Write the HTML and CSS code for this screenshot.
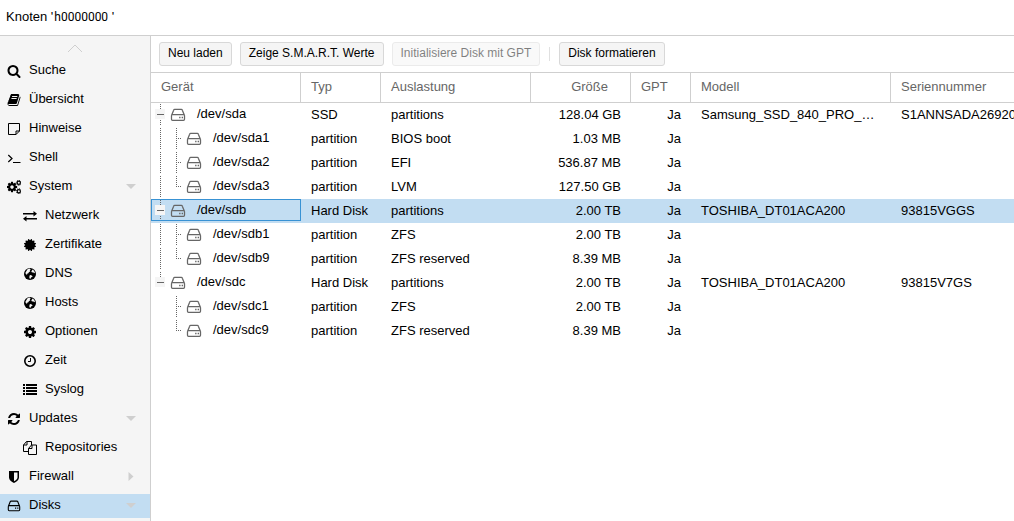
FILE: index.html
```html
<!DOCTYPE html>
<html lang="de">
<head>
<meta charset="utf-8">
<title>Knoten – Disks</title>
<link rel="stylesheet" href="styles.css">
</head>
<body>
<svg class="sprite" aria-hidden="true">
  <symbol id="search" viewBox="0 0 1792 1792"><path d="M1216 832q0-185-131.500-316.500t-316.500-131.500-316.500 131.500-131.500 316.500 131.500 316.500 316.500 131.500 316.500-131.500 131.500-316.500zm512 832q0 52-38 90t-90 38q-54 0-90-38l-343-342q-179 124-399 124-143 0-273.500-55.500t-225-150-150-225-55.500-273.500 55.500-273.500 150-225 225-150 273.500-55.500 273.500 55.500 225 150 150 225 55.500 273.500q0 220-124 399l343 343q37 37 37 90z"/></symbol>
  <symbol id="book" viewBox="0 0 1792 1792"><path d="M1703 478q40 57 18 129l-275 906q-19 64-76.500 107.500t-122.500 43.500h-923q-77 0-148.500-53.500t-99.500-131.500q-24-67-2-127 0-4 3-27t4-37q1-8-3-21.500t-3-19.500q2-11 8-21t16.500-23.500 16.500-23.500q23-38 45-91.500t30-91.500q3-10 .5-30t-.5-28q3-11 17-28t17-23q21-36 42-92t25-90q1-9-2.500-32t.5-28q4-13 22-30.500t22-22.500q19-26 42.500-84.500t27.500-96.500q1-8-3-25.500t-2-26.500q2-8 9-18t18-23 17-21q8-12 16.500-30.500t15-35 16-36 19.500-32 26.500-23.500 36-11.500 47.500 5.500l-1 3q38-9 51-9h761q74 0 114 56t18 130l-274 906q-36 119-71.500 153.500t-128.500 34.500h-869q-27 0-38 15-11 16-1 43 24 70 144 70h923q29 0 56-15.500t35-41.500l300-987q7-22 5-57 38 15 59 43zm-1064 2q-4 13 2 22.500t20 9.500h608q13 0 25.500-9.500t16.500-22.500l21-64q4-13-2-22.500t-20-9.500h-608q-13 0-25.500 9.500t-16.500 22.500zm-83 256q-4 13 2 22.500t20 9.500h608q13 0 25.500-9.500t16.500-22.500l21-64q4-13-2-22.500t-20-9.500h-608q-13 0-25.500 9.500t-16.500 22.500z"/></symbol>
  <symbol id="note" viewBox="0 0 14 14"><path d="M1.500 1.500h11v7.500l-3.500 3.500h-7.500zM12.500 9h-3.500v3.500" fill="none" stroke="currentColor"/></symbol>
  <symbol id="terminal" viewBox="0 0 14 14"><path d="M1.300 4l3.700 3.500-3.700 3.500M6 11.500h7.500" fill="none" stroke="currentColor" stroke-width="1.200"/></symbol>
  <symbol id="cog" viewBox="0 0 1792 1792"><path d="M1152 896q0-106-75-181t-181-75-181 75-75 181 75 181 181 75 181-75 75-181zm512-109v222q0 12-8 23t-20 13l-185 28q-19 54-39 91 35 50 107 138 10 12 10 25t-9 23q-27 37-99 108t-94 71q-12 0-26-9l-138-108q-44 23-91 38-16 136-29 186-7 28-36 28h-222q-14 0-24.500-8.500t-11.500-21.500l-28-184q-49-16-90-37l-141 107q-10 9-25 9-14 0-25-11-126-114-165-168-7-10-7-23 0-12 8-23 15-21 51-66.500t54-70.500q-27-50-41-99l-183-27q-13-2-21-12.500t-8-23.500v-222q0-12 8-23t19-13l186-28q14-46 39-92-40-57-107-138-10-12-10-24 0-10 9-23 26-36 98.500-107.500t94.500-71.500q13 0 26 10l138 107q44-23 91-38 16-136 29-186 7-28 36-28h222q14 0 24.500 8.500t11.500 21.500l28 184q49 16 90 37l142-107q9-9 24-9 13 0 25 10 129 119 165 170 7 8 7 22 0 12-8 23-15 21-51 66.500t-54 70.500q26 50 41 98l183 28q13 2 21 12.500t8 23.500z"/></symbol>
  <symbol id="cogs" viewBox="0 0 14 14" overflow="visible"><use href="#cog" x="-1" y="1" width="12" height="12"/><g fill="none" stroke="currentColor"><circle cx="11.800" cy="2.800" r="1.600" stroke-width="1.200"/><circle cx="11.800" cy="2.800" r="2.500" stroke-dasharray="1 .96"/><circle cx="11.800" cy="11.200" r="1.600" stroke-width="1.200"/><circle cx="11.800" cy="11.200" r="2.500" stroke-dasharray="1 .96"/></g></symbol>
  <symbol id="exchange" viewBox="0 0 14 14"><path d="M0 4h10.500V2l3.500 2.800-3.500 2.700V5.500H0zM14 9H3.500V7L0 9.800l3.500 2.700v-2H14z"/></symbol>
  <symbol id="certificate" viewBox="0 0 1792 1792"><path d="M1504 896l138 135q30 28 20 70-12 41-52 51l-188 48 53 186q12 41-19 70-29 31-70 19l-186-53-48 188q-10 40-51 52-12 2-19 2-31 0-51-22l-135-138-135 138q-28 30-70 20-41-11-51-52l-48-188-186 53q-41 12-70-19-31-29-19-70l53-186-188-48q-40-10-52-51-10-42 20-70l138-135-138-135q-30-28-20-70 12-41 52-51l188-48-53-186q-12-41 19-70 29-31 70-19l186 53 48-188q10-41 51-51 41-12 70 19l135 139 135-139q29-30 70-19 41 10 51 51l48 188 186-53q41-12 70 19 31 29 19 70l-53 186 188 48q40 10 52 51 10 42-20 70z"/></symbol>
  <symbol id="globe" viewBox="0 0 14 14"><circle cx="7" cy="7" r="6"/><path class="land" d="M4.500 2.200l2-.6 1.200 1-1 .8.600.800-1.400 1-.8 1.300-1.300.3.500 1-1-.3-1-1.600zM8.300 4.500l1.200-1.900 1.600 1.200.9 2-1 .5-.8-1-1.200.2zM7 8l1.800.4.900 1-1.600 1-1 1.800-.8-1.800.2-1.400z"/></symbol>
  <symbol id="clock" viewBox="0 0 14 14"><g fill="none" stroke="currentColor"><circle cx="7" cy="7" r="5.200" stroke-width="1.600"/><path d="M7.500 4v3.500H5"/></g></symbol>
  <symbol id="list" viewBox="0 0 14 14"><path d="M0 1h2v2H0zM3 1h11v2H3zM0 4h2v2H0zM3 4h11v2H3zM0 7h2v2H0zM3 7h11v2H3zM0 10h2v2H0zM3 10h11v2H3z"/></symbol>
  <symbol id="refresh" viewBox="0 0 1792 1792"><path d="M1639 1056q0 5-1 7-64 268-268 434.500t-478 166.500q-146 0-282.500-55t-243.500-157l-129 129q-19 19-45 19t-45-19-19-45v-448q0-26 19-45t45-19h448q26 0 45 19t19 45-19 45l-137 137q71 66 161 102t187 36q134 0 250-65t186-179q11-17 53-117 8-23 30-23h192q13 0 22.500 9.500t9.500 22.500zm25-800v448q0 26-19 45t-45 19h-448q-26 0-45-19t-19-45 19-45l138-138q-148-137-349-137-134 0-250 65t-186 179q-11 17-53 117-8 23-30 23h-199q-13 0-22.500-9.500t-9.500-22.500v-7q65-268 270-434.500t480-166.500q146 0 284 55.500t245 156.500l130-129q19-19 45-19t45 19 19 45z"/></symbol>
  <symbol id="files" viewBox="0 0 14 14"><path d="M5.500 10.500h-5V4L3.500.5h5V4M4 .5V4H.5M8.500 4h5v9.500h-8V7.500zM9 4v3.500H5.500" fill="none" stroke="currentColor"/></symbol>
  <symbol id="shield" viewBox="0 0 14 14"><path fill-rule="evenodd" d="M2 1h10v6.500c0 2.500-2.500 4.500-5 5.500-2.500-1-5-3-5-5.500zM7 2.500v8.800c2-1 3.500-2.300 3.500-3.800v-5z"/></symbol>
  <symbol id="hdd" viewBox="0 0 14 14"><path d="M1.300 7.500v3.300q0 .9.900.9h9.600q.9 0 .9-.9V7.500q0-.9-.9-.9H2.200q-.9 0-.9.900L3.200 2.800q.200-.7.900-.7h5.800q.7 0 .9.700l1.900 4.700" fill="none" stroke="currentColor" stroke-width="1.100"/><path d="M8 8.600h1.200v1.200H8zM10.200 8.600h1.200v1.200h-1.200z"/></symbol>
  <symbol id="down" viewBox="0 0 10 10"><path d="M0 2h10L5 7z"/></symbol>
  <symbol id="right" viewBox="0 0 10 10"><path d="M2.500 0v9l5-4.500z"/></symbol>
  <symbol id="minus" viewBox="0 0 16 24"><path class="box" d="M4 6h10v10H4z"/><path d="M6 11h7v1H6z"/></symbol>
  <symbol id="line" viewBox="0 0 16 24"><path class="dots" d="M9.500 1v21"/></symbol>
  <symbol id="line-top" viewBox="0 0 16 24"><path class="dots" d="M9.500 1v5"/></symbol>
  <symbol id="tee" viewBox="0 0 16 24"><path class="dots" d="M9.500 1v21M11 11.500h3"/></symbol>
  <symbol id="end" viewBox="0 0 16 24"><path class="dots" d="M9.500 1v11M11 11.500h3"/></symbol>
</svg>

<header class="title"><h1>Knoten '<span class="node">h0000000</span> '</h1></header>
<div class="layout">
  <nav class="sidebar" aria-label="Knoten">
    <button class="scroll-up" aria-label="Nach oben"><svg viewBox="0 0 16 10"><path d="M1 9l7-7 7 7"/></svg></button>
    <ul class="menu">
      <li><a class="item" href="#"><svg class="icon"><use href="#search"/></svg><span class="label">Suche</span></a></li>
      <li><a class="item" href="#"><svg class="icon"><use href="#book"/></svg><span class="label">Übersicht</span></a></li>
      <li><a class="item" href="#"><svg class="icon"><use href="#note"/></svg><span class="label">Hinweise</span></a></li>
      <li><a class="item" href="#"><svg class="icon"><use href="#terminal"/></svg><span class="label">Shell</span></a></li>
      <li><a class="item" href="#"><svg class="icon"><use href="#cogs"/></svg><span class="label">System</span><svg class="caret"><use href="#down"/></svg></a></li>
      <li><a class="item sub" href="#"><svg class="icon"><use href="#exchange"/></svg><span class="label">Netzwerk</span></a></li>
      <li><a class="item sub" href="#"><svg class="icon"><use href="#certificate"/></svg><span class="label">Zertifikate</span></a></li>
      <li><a class="item sub" href="#"><svg class="icon"><use href="#globe"/></svg><span class="label">DNS</span></a></li>
      <li><a class="item sub" href="#"><svg class="icon"><use href="#globe"/></svg><span class="label">Hosts</span></a></li>
      <li><a class="item sub" href="#"><svg class="icon"><use href="#cog"/></svg><span class="label">Optionen</span></a></li>
      <li><a class="item sub" href="#"><svg class="icon"><use href="#clock"/></svg><span class="label">Zeit</span></a></li>
      <li><a class="item sub" href="#"><svg class="icon"><use href="#list"/></svg><span class="label">Syslog</span></a></li>
      <li><a class="item" href="#"><svg class="icon"><use href="#refresh"/></svg><span class="label">Updates</span><svg class="caret"><use href="#down"/></svg></a></li>
      <li><a class="item sub" href="#"><svg class="icon"><use href="#files"/></svg><span class="label">Repositories</span></a></li>
      <li><a class="item" href="#"><svg class="icon"><use href="#shield"/></svg><span class="label">Firewall</span><svg class="caret"><use href="#right"/></svg></a></li>
      <li><a class="item selected" href="#" aria-current="page"><svg class="icon"><use href="#hdd"/></svg><span class="label">Disks</span><svg class="caret"><use href="#down"/></svg></a></li>
    </ul>
  </nav>
  <main class="main">
    <div class="toolbar">
      <button class="btn">Neu laden</button>
      <button class="btn">Zeige S.M.A.R.T. Werte</button>
      <button class="btn" disabled>Initialisiere Disk mit GPT</button>
      <span class="separator"></span>
      <button class="btn">Disk formatieren</button>
    </div>
    <table class="grid">
      <colgroup><col class="c-device"><col class="c-type"><col class="c-usage"><col class="c-size"><col class="c-gpt"><col class="c-model"><col></colgroup>
      <thead><tr><th>Gerät</th><th>Typ</th><th>Auslastung</th><th class="size">Größe</th><th>GPT</th><th>Modell</th><th>Seriennummer</th></tr></thead>
      <tbody>
        <tr><td class="device"><div class="tree"><button class="toggle" aria-label="Zuklappen"><svg class="elbow"><use href="#line"/><use href="#minus"/></svg></button><svg class="disk"><use href="#hdd"/></svg><span class="name">/dev/sda</span></div></td><td>SSD</td><td>partitions</td><td class="num">128.04 GB</td><td class="num">Ja</td><td>Samsung_SSD_840_PRO_Series</td><td class="serial">S1ANNSADA26920</td></tr>
        <tr><td class="device"><div class="tree"><svg class="elbow"><use href="#line"/></svg><svg class="elbow"><use href="#tee"/></svg><svg class="disk"><use href="#hdd"/></svg><span class="name">/dev/sda1</span></div></td><td>partition</td><td>BIOS boot</td><td class="num">1.03 MB</td><td class="num">Ja</td><td></td><td></td></tr>
        <tr><td class="device"><div class="tree"><svg class="elbow"><use href="#line"/></svg><svg class="elbow"><use href="#tee"/></svg><svg class="disk"><use href="#hdd"/></svg><span class="name">/dev/sda2</span></div></td><td>partition</td><td>EFI</td><td class="num">536.87 MB</td><td class="num">Ja</td><td></td><td></td></tr>
        <tr><td class="device"><div class="tree"><svg class="elbow"><use href="#line"/></svg><svg class="elbow"><use href="#end"/></svg><svg class="disk"><use href="#hdd"/></svg><span class="name">/dev/sda3</span></div></td><td>partition</td><td>LVM</td><td class="num">127.50 GB</td><td class="num">Ja</td><td></td><td></td></tr>
        <tr class="selected"><td class="device focused"><div class="tree"><button class="toggle" aria-label="Zuklappen"><svg class="elbow"><use href="#line"/><use href="#minus"/></svg></button><svg class="disk"><use href="#hdd"/></svg><span class="name">/dev/sdb</span></div></td><td>Hard Disk</td><td>partitions</td><td class="num">2.00 TB</td><td class="num">Ja</td><td>TOSHIBA_DT01ACA200</td><td class="serial">93815VGGS</td></tr>
        <tr><td class="device"><div class="tree"><svg class="elbow"><use href="#line"/></svg><svg class="elbow"><use href="#tee"/></svg><svg class="disk"><use href="#hdd"/></svg><span class="name">/dev/sdb1</span></div></td><td>partition</td><td>ZFS</td><td class="num">2.00 TB</td><td class="num">Ja</td><td></td><td></td></tr>
        <tr><td class="device"><div class="tree"><svg class="elbow"><use href="#line"/></svg><svg class="elbow"><use href="#end"/></svg><svg class="disk"><use href="#hdd"/></svg><span class="name">/dev/sdb9</span></div></td><td>partition</td><td>ZFS reserved</td><td class="num">8.39 MB</td><td class="num">Ja</td><td></td><td></td></tr>
        <tr><td class="device"><div class="tree"><button class="toggle" aria-label="Zuklappen"><svg class="elbow"><use href="#line-top"/><use href="#minus"/></svg></button><svg class="disk"><use href="#hdd"/></svg><span class="name">/dev/sdc</span></div></td><td>Hard Disk</td><td>partitions</td><td class="num">2.00 TB</td><td class="num">Ja</td><td>TOSHIBA_DT01ACA200</td><td class="serial">93815V7GS</td></tr>
        <tr><td class="device"><div class="tree"><span class="elbow"></span><svg class="elbow"><use href="#tee"/></svg><svg class="disk"><use href="#hdd"/></svg><span class="name">/dev/sdc1</span></div></td><td>partition</td><td>ZFS</td><td class="num">2.00 TB</td><td class="num">Ja</td><td></td><td></td></tr>
        <tr><td class="device"><div class="tree"><span class="elbow"></span><svg class="elbow"><use href="#end"/></svg><svg class="disk"><use href="#hdd"/></svg><span class="name">/dev/sdc9</span></div></td><td>partition</td><td>ZFS reserved</td><td class="num">8.39 MB</td><td class="num">Ja</td><td></td><td></td></tr>
      </tbody>
    </table>
  </main>
</div>
</body>
</html>
```
FILE: styles.css
```css
* { box-sizing: border-box; }

body {
  display: flex;
  flex-direction: column;
  height: 100vh;
  margin: 0;
  overflow: hidden;
  background: #fff;
  color: #000;
  font-family: "Liberation Sans", Arial, sans-serif;
  font-size: 13px;
}

.sprite { position: absolute; width: 0; height: 0; }

.dots { fill: none; stroke: #666; stroke-dasharray: 1 1; }
.box { fill: #f5f5f5; }
.land { fill: #f5f5f5; }

/* Title bar */
.title {
  flex: none;
  padding: 7px 6px 8px;
  border-bottom: 1px solid #cfcfcf;
}
.title h1 {
  margin: 0;
  font-size: 13px;
  font-weight: normal;
  line-height: 20px;
}
.node { padding-left: 1px; font-family: Roboto, sans-serif; font-size: 12px; }

.layout { display: flex; flex: 1; min-height: 0; }

/* Navigation */
.sidebar {
  flex: none;
  width: 151px;
  overflow: hidden;
  border-right: 1px solid #cfcfcf;
  background: #f5f5f5;
}
.scroll-up {
  display: flex;
  align-items: center;
  justify-content: center;
  width: 100%;
  height: 23px;
  padding: 0;
  border: 0;
  background: none;
}
.scroll-up svg {
  width: 16px;
  height: 10px;
  fill: none;
  stroke: #cfcfcf;
}
.menu {
  display: flex;
  flex-direction: column;
  gap: 5px;
  margin: 0;
  padding: 0;
  list-style: none;
}
.item {
  display: flex;
  align-items: center;
  gap: 8px;
  height: 24px;
  padding: 0 14px 0 7px;
  color: #000;
  text-decoration: none;
}
.item.sub { padding-left: 23px; }
.item.selected { background: #c2ddf2; }
.icon { flex: none; width: 14px; height: 14px; fill: currentColor; color: #000; }
.label { flex: 1; padding-bottom: 3px; line-height: 18px; }
.caret { flex: none; width: 10px; height: 10px; fill: #cfcfcf; }

/* Content */
.main { flex: 1; min-width: 0; overflow: hidden; }
.toolbar {
  display: flex;
  align-items: center;
  gap: 8px;
  height: 37px;
  padding: 0 8px;
  border-bottom: 1px solid #cfcfcf;
}
.btn {
  flex: none;
  height: 24px;
  padding: 0 8px 2px;
  border: 1px solid #d8d8d8;
  border-radius: 3px;
  background: #f5f5f5;
  color: #000;
  font: inherit;
  font-size: 12px;
  line-height: 20px;
}
.btn:disabled { opacity: .5; }
.separator { width: 1px; height: 14px; margin: 0 1px; background: #e0e0e0; }

.grid {
  width: 100%;
  table-layout: fixed;
  border-spacing: 0;
}
.c-device, .c-usage { width: 150px; }
.c-type { width: 80px; }
.c-size { width: 100px; }
.c-gpt { width: 60px; }
.c-model { width: 200px; }

.grid th {
  height: 30px;
  padding: 0 10px 2px;
  border-right: 1px solid #cfcfcf;
  border-bottom: 1px solid #cfcfcf;
  color: #666;
  font-weight: normal;
  text-align: left;
}
.grid th:last-child { border-right: 0; }
.grid th.size { padding-right: 22px; text-align: right; }

.grid td {
  height: 24px;
  padding: 0 10px;
  overflow: hidden;
  line-height: 24px;
  text-overflow: ellipsis;
  white-space: nowrap;
}
.grid td.num { text-align: right; }
.grid td.serial { padding-right: 0; text-overflow: clip; }
.grid td.device { padding: 0; vertical-align: top; }
.selected td { background: #c2ddf2; }

.tree { display: flex; align-items: center; height: 24px; }

/* Focus frame laid over the cell */
.focused .tree { position: relative; }
.focused .tree::after {
  content: "";
  position: absolute;
  inset: 0 0 2px;
  border: 1px solid #3892d4;
  pointer-events: none;
}

.toggle { display: flex; padding: 0; border: 0; background: none; }
.elbow { flex: none; width: 16px; height: 24px; fill: #666; }
.disk { flex: none; width: 16px; height: 16px; margin: 0 11px 0 3px; fill: currentColor; color: #666; }
.name { padding-bottom: 2px; line-height: 20px; }
```
